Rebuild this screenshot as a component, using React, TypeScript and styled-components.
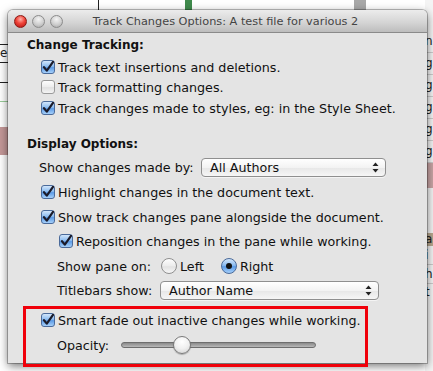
import React from "react"
import styled, { createGlobalStyle, css } from "styled-components"

const GlobalStyle = createGlobalStyle`
  html, body {
    margin: 0;
    padding: 0;
    background: #fff;
  }
  body {
    font-family: "DejaVu Sans", "Liberation Sans", sans-serif;
  }
`

const Page = styled.div`
  position: relative;
  width: 433px;
  height: 371px;
  overflow: hidden;
  background: #fff;
  display: flex;
  justify-content: space-between;
`

const LeftStrip = styled.div`
  width: 8px;
  display: flex;
  flex-direction: column;
`

const RightStrip = styled.div`
  width: 8px;
  padding-top: 30px;
  display: flex;
  flex-direction: column;
  background: #f4f4f4;
`

const Cell = styled.div<{ $h: number; $bg?: string; $line?: string }>`
  height: ${p => p.$h}px;
  background: ${p => p.$bg || "transparent"};
  border-bottom: 1px solid ${p => p.$line || "transparent"};
  font-size: 12px;
  line-height: ${p => p.$h}px;
  overflow: hidden;
  color: #222;
`

const TopMarks = styled.div`
  position: absolute;
  top: 0;
  left: 0;
  right: 0;
  height: 12px;
  display: flex;
`

const Mark = styled.div<{ $x: number; $w: number; $bg: string }>`
  margin-left: ${p => p.$x}px;
  width: ${p => p.$w}px;
  background: ${p => p.$bg};
`

const Window = styled.div`
  position: absolute;
  left: 8px;
  top: 10px;
  width: 419px;
  height: 353px;
  background: #e4e4e4;
  border-radius: 5px 5px 0 0;
  box-shadow: 0 3px 10px rgba(0, 0, 0, 0.55), 0 0 0 1px rgba(0, 0, 0, 0.25);
  display: flex;
  flex-direction: column;
  font-size: 12.7px;
  color: #111;
`

const TitleBar = styled.div`
  height: 22px;
  border-radius: 5px 5px 0 0;
  background: linear-gradient(#ececec, #d3d3d3 60%, #bdbdbd);
  border-bottom: 1px solid #8a8a8a;
  display: flex;
  align-items: center;
  padding-left: 6px;
  position: relative;
`

const Lights = styled.div`
  display: flex;
  gap: 5px;
`

const Light = styled.div<{ $red?: boolean }>`
  width: 13px;
  height: 13px;
  border-radius: 50%;
  box-sizing: border-box;
  ${p => p.$red ? css`
    background: radial-gradient(circle at 50% 30%, #ffb0a8 0%, #f0453a 45%, #b01010 100%);
    border: 1px solid #8a1a14;
  ` : css`
    background: radial-gradient(circle at 50% 30%, #f4f4f4 0%, #cfcfcf 55%, #a5a5a5 100%);
    border: 1px solid #8c8c8c;
  `}
`

const Title = styled.div`
  flex: 1;
  text-align: center;
  font-size: 11.3px;
  color: #444;
  margin-right: 53px;
  padding-left: 14px;
`

const Body = styled.div`
  display: flex;
  flex-direction: column;
  padding: 2px 0 0 19px;
`

const Heading = styled.div<{ $mt: number }>`
  height: 20px;
  margin-top: ${p => p.$mt}px;
  display: flex;
  align-items: center;
  font-weight: bold;
  font-size: 12px;
`

const Row = styled.div<{ $mt: number; $indent: number; $h?: number }>`
  height: ${p => p.$h || 20}px;
  margin-top: ${p => p.$mt}px;
  padding-left: ${p => p.$indent}px;
  display: flex;
  align-items: center;
  white-space: nowrap;
`

const Box = styled.span<{ $on?: boolean }>`
  width: 14px;
  height: 14px;
  box-sizing: border-box;
  border-radius: 3px;
  margin-right: 3px;
  display: inline-flex;
  align-items: center;
  justify-content: center;
  flex: none;
  ${p => p.$on ? css`
    border: 1px solid #4a6a9a;
    background: linear-gradient(#d2e6fb, #8cbcf0 45%, #5c9be6 55%, #a6d0fa);
  ` : css`
    border: 1px solid #9a9a9a;
    background: linear-gradient(#fdfdfd, #ececec 50%, #e0e0e0 55%, #f4f4f4);
  `}
`

const Label = styled.span<{ $w?: number }>`
  display: inline-block;
  min-width: ${p => p.$w || 0}px;
`

const Popup = styled.div<{ $w: number }>`
  width: ${p => p.$w}px;
  height: 19px;
  box-sizing: border-box;
  border: 1px solid #8f8f8f;
  border-radius: 4px;
  background: linear-gradient(#ffffff, #f3f3f3 50%, #e8e8e8 55%, #f6f6f6);
  box-shadow: 0 1px 0 rgba(255, 255, 255, 0.6);
  display: flex;
  align-items: center;
  justify-content: space-between;
  padding: 0 6px 0 8px;
`

const Radio = styled.span<{ $on?: boolean }>`
  width: 16px;
  height: 16px;
  box-sizing: border-box;
  border-radius: 50%;
  margin-right: 3px;
  display: inline-flex;
  align-items: center;
  justify-content: center;
  flex: none;
  ${p => p.$on ? css`
    border: 1px solid #4a6a9a;
    background: linear-gradient(#d2e6fb, #8cbcf0 45%, #5c9be6 55%, #a6d0fa);
  ` : css`
    border: 1px solid #8f8f8f;
    background: linear-gradient(#fdfdfd, #ececec 50%, #e2e2e2 55%, #f6f6f6);
  `}
`

const Dot = styled.span`
  width: 6px;
  height: 6px;
  border-radius: 50%;
  background: #111;
`

const RadioGroup = styled.div`
  display: flex;
  align-items: center;
  gap: 17px;
`

const RadioItem = styled.div`
  display: flex;
  align-items: center;
`

const Slider = styled.div`
  position: relative;
  width: 195px;
  height: 6px;
  box-sizing: border-box;
  border: 1px solid #6e6e6e;
  border-radius: 3px;
  background: linear-gradient(#8a8a8a, #b9b9b9);
`

const Knob = styled.div`
  position: absolute;
  top: -7px;
  width: 18px;
  height: 18px;
  box-sizing: border-box;
  border-radius: 50%;
  border: 1px solid #7a7a7a;
  background: radial-gradient(circle at 50% 30%, #ffffff 0%, #f0f0f0 50%, #cfcfcf 100%);
  box-shadow: 0 1px 1px rgba(0, 0, 0, 0.25);
`

const Highlight = styled.div`
  position: absolute;
  left: 23px;
  top: 306px;
  width: 345px;
  height: 61px;
  box-sizing: border-box;
  border: 3px solid #f0000a;
`

function Check() {
  return (
    <svg width="12" height="12" viewBox="0 0 12 12">
      <path d="M2 6.2 L4.8 9.6 L11 0.8" fill="none" stroke="#1b1b2a" strokeWidth="2.2" strokeLinejoin="round" strokeLinecap="round" />
    </svg>
  )
}

function Arrows() {
  return (
    <svg width="7" height="11" viewBox="0 0 7 11">
      <path d="M3.5 0.5 L6.5 4 L0.5 4 Z" fill="#222" />
      <path d="M3.5 10.5 L6.5 7 L0.5 7 Z" fill="#222" />
    </svg>
  )
}

function CheckRow({ on, text, mt, indent }: { on?: boolean; text: string; mt: number; indent: number }) {
  return (
    <Row $mt={mt} $indent={indent}>
      <Box $on={on}>{on && <Check />}</Box>
      <Label>{text}</Label>
    </Row>
  )
}

export default function App() {
  const opacity = 0.31
  return <>
    <GlobalStyle />
    <Page>
      <LeftStrip>
        <Cell $h={44} $line="#222" />
        <Cell $h={17} $line="#222">e</Cell>
        <Cell $h={19} $line="#222" />
        <Cell $h={18} $line="#9c9" />
        <Cell $h={24} />
        <Cell $h={27} $bg="#c49898" />
      </LeftStrip>
      <RightStrip>
        <Cell $h={22} $line="#ccc">n</Cell>
        <Cell $h={21} $line="#ccc">g</Cell>
        <Cell $h={21} $line="#ccc">g</Cell>
        <Cell $h={21} $line="#ccc">g</Cell>
        <Cell $h={21} $line="#ccc">g</Cell>
        <Cell $h={21} $line="#ccc">g</Cell>
        <Cell $h={24} $bg="#c9a5a5" />
        <Cell $h={44} />
        <Cell $h={12} $bg="#b9a88f">a</Cell>
        <Cell $h={18} $line="#ccc">i</Cell>
        <Cell $h={18} $line="#ccc">h</Cell>
        <Cell $h={16}>t</Cell>
      </RightStrip>
      <TopMarks>
        <Mark $x={98} $w={1} $bg="#222" />
        <Mark $x={86} $w={7} $bg="#3f8a4c" />
        <Mark $x={162} $w={12} $bg="#a8a8a8" />
      </TopMarks>

      <Window>
        <TitleBar>
          <Lights>
            <Light $red />
            <Light />
            <Light />
          </Lights>
          <Title>Track Changes Options: A test file for various 2</Title>
        </TitleBar>
        <Body>
          <Heading $mt={0}>Change Tracking:</Heading>
          <CheckRow on text="Track text insertions and deletions." mt={2} indent={14} />
          <CheckRow text="Track formatting changes." mt={0} indent={14} />
          <CheckRow on text="Track changes made to styles, eg: in the Style Sheet." mt={1} indent={14} />

          <Heading $mt={16}>Display Options:</Heading>
          <Row $mt={3} $indent={12}>
            <Label $w={162}>Show changes made by:</Label>
            <Popup $w={185}>All Authors<Arrows /></Popup>
          </Row>
          <CheckRow on text="Highlight changes in the document text." mt={5} indent={14} />
          <CheckRow on text="Show track changes pane alongside the document." mt={5} indent={14} />
          <CheckRow on text="Reposition changes in the pane while working." mt={4} indent={32} />
          <Row $mt={5} $indent={30}>
            <Label $w={104}>Show pane on:</Label>
            <RadioGroup>
              <RadioItem><Radio />Left</RadioItem>
              <RadioItem><Radio $on><Dot /></Radio>Right</RadioItem>
            </RadioGroup>
          </Row>
          <Row $mt={4} $indent={30}>
            <Label $w={103}>Titlebars show:</Label>
            <Popup $w={219}>Author Name<Arrows /></Popup>
          </Row>
          <CheckRow on text="Smart fade out inactive changes while working." mt={10} indent={14} />
          <Row $mt={5} $indent={30}>
            <Label $w={64}>Opacity:</Label>
            <Slider>
              <Knob style={{ left: `calc(${opacity * 100}% - 9px)` }} />
            </Slider>
          </Row>
        </Body>
      </Window>
      <Highlight />
    </Page>
  </>
}
